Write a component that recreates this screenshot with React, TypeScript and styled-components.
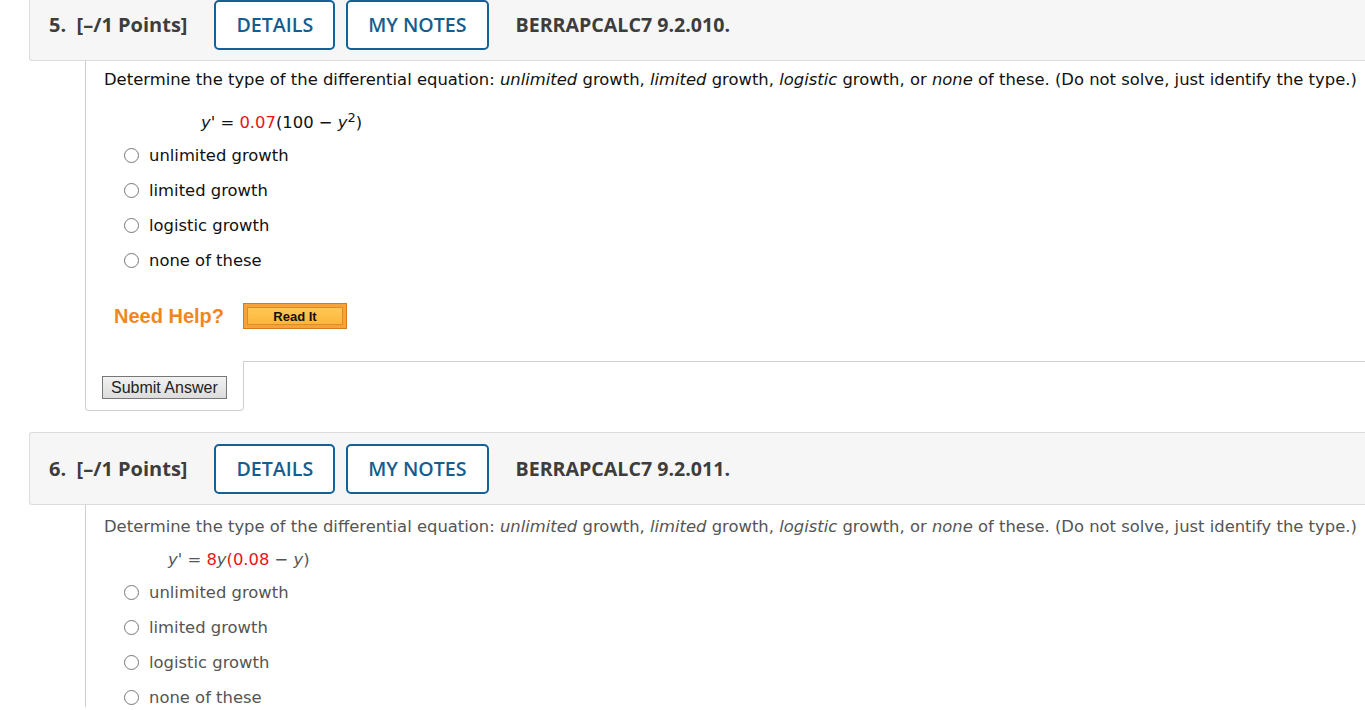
import React from 'react';
import styled, { createGlobalStyle } from 'styled-components';

const GlobalStyle = createGlobalStyle`
    body {
        margin: 0;
        background: #fff;
        font-family: "DejaVu Sans", Verdana, sans-serif;
        overflow: hidden;
    }
`;

const Page = styled.div`
    margin-top: -12px;
    padding-left: 29px;
`;

const Question = styled.section`
    margin-bottom: 21px;
`;

const Header = styled.div`
    display: flex;
    align-items: center;
    height: 73px;
    padding-left: 19px;
    background: #f6f6f6;
    border: 1px solid #dcdcdc;
    border-right: none;
    border-radius: 3px 0 0 3px;
    box-sizing: border-box;
`;

const Points = styled.span`
    font-family: "Open Sans", sans-serif;
    font-weight: 700;
    font-size: 20px;
    color: #3d3d3d;
    margin-right: 27px;
`;

const HeaderButton = styled.button`
    height: 50px;
    padding: 0 20px;
    margin-right: 11px;
    background: #fff;
    border: 2px solid #136296;
    border-radius: 5px;
    font-family: "Open Sans", sans-serif;
    font-weight: 600;
    font-size: 19.6px;
    color: #155d8f;
`;

const Code = styled.span`
    margin-left: 16px;
    font-family: "Open Sans", sans-serif;
    font-weight: 700;
    font-size: 19.6px;
    color: #3d3d3d;
`;

const Body = styled.div<{ $muted?: boolean; $top: number }>`
    margin-left: 56px;
    border-left: 1px solid #cfcfcf;
    padding: ${p => p.$top}px 0 0 18px;
    color: ${p => (p.$muted ? '#555' : '#111')};
    font-size: 16.4px;
`;

const Prompt = styled.p`
    margin: 0;
    line-height: 20px;
    white-space: nowrap;
`;

const Equation = styled.div<{ $indent: number; $gap: number }>`
    margin: ${p => p.$gap}px 0 0 ${p => p.$indent}px;
    line-height: 22px;
`;

const Var = styled.i`
    font-style: italic;
`;

const Red = styled.span`
    color: #e4151b;
`;

const Sup = styled.sup`
    font-size: 13px;
`;

const Options = styled.div`
    display: flex;
    flex-direction: column;
    gap: 15px;
    margin-top: 11px;
    padding-left: 20px;
`;

const Option = styled.label`
    display: flex;
    align-items: center;
    gap: 10px;
    height: 20px;
`;

const Radio = styled.span`
    width: 15px;
    height: 15px;
    border: 1.5px solid #777;
    border-radius: 50%;
    box-sizing: border-box;
    background: #fff;
`;

const HelpRow = styled.div`
    display: flex;
    align-items: center;
    gap: 19px;
    margin: 33px 0 0 10px;
    padding-bottom: 32px;
`;

const NeedHelp = styled.span`
    font-family: "Liberation Sans", Arial, sans-serif;
    font-weight: 700;
    font-size: 20px;
    color: #f1871b;
`;

const ReadIt = styled.button`
    width: 104px;
    height: 26px;
    padding: 0;
    background: #f5a23a;
    border: 1px solid #d47a1f;
    display: flex;
    align-items: center;
    justify-content: center;
    font-family: "Liberation Sans", Arial, sans-serif;
    font-weight: 700;
    font-size: 13px;
    color: #111;

    span {
        display: flex;
        align-items: center;
        justify-content: center;
        width: 96px;
        height: 18px;
        background: linear-gradient(#ffc753, #fdb63e);
        border: 1px solid #dc8d2a;
        box-sizing: border-box;
    }
`;

const Footer = styled.div`
    display: flex;
    margin-left: 56px;
`;

const SubmitBox = styled.div`
    width: 159px;
    height: 50px;
    box-sizing: border-box;
    border: 1px solid #cfcfcf;
    border-top: none;
    border-radius: 0 0 4px 4px;
    padding: 15px 0 0 16px;
`;

const Rest = styled.div`
    flex: 1;
    border-top: 1px solid #cfcfcf;
`;

const SubmitButton = styled.button`
    height: 23px;
    padding: 0 8px;
    background: linear-gradient(#f2f2f2, #dcdcdc);
    border: 1px solid #777;
    border-radius: 0;
    font-family: "Liberation Sans", Arial, sans-serif;
    font-size: 16px;
    color: #222;
    line-height: 19px;
`;

const OPTIONS = ['unlimited growth', 'limited growth', 'logistic growth', 'none of these'];

const PromptText = () => (
    <Prompt>
        Determine the type of the differential equation: <Var>unlimited</Var> growth, <Var>limited</Var> growth,{' '}
        <Var>logistic</Var> growth, or <Var>none</Var> of these. (Do not solve, just identify the type.)
    </Prompt>
);

const QuestionHeader = ({ num, code }: { num: number; code: string }) => (
    <Header>
        <Points>{num}.&nbsp; [–/1 Points]</Points>
        <HeaderButton>DETAILS</HeaderButton>
        <HeaderButton>MY NOTES</HeaderButton>
        <Code>{code}</Code>
    </Header>
);

const OptionList = () => (
    <Options>
        {OPTIONS.map(o => (
            <Option key={o}>
                <Radio />
                {o}
            </Option>
        ))}
    </Options>
);

const App = () => (
    <>
        <GlobalStyle />
        <Page>
            <Question>
                <QuestionHeader num={5} code="BERRAPCALC7 9.2.010." />
                <Body $top={9}>
                    <PromptText />
                    <Equation $indent={97} $gap={17}>
                        <Var>y'</Var> = <Red>0.07</Red>(100 − <Var>y</Var>
                        <Sup>2</Sup>)
                    </Equation>
                    <OptionList />
                    <HelpRow>
                        <NeedHelp>Need Help?</NeedHelp>
                        <ReadIt>
                            <span>Read It</span>
                        </ReadIt>
                    </HelpRow>
                </Body>
                <Footer>
                    <SubmitBox>
                        <SubmitButton>Submit Answer</SubmitButton>
                    </SubmitBox>
                    <Rest />
                </Footer>
            </Question>
            <Question>
                <QuestionHeader num={6} code="BERRAPCALC7 9.2.011." />
                <Body $muted $top={12}>
                    <PromptText />
                    <Equation $indent={64} $gap={12}>
                        <Var>y'</Var> = <Red>8</Red><Var>y</Var><Red>(0.08</Red> − <Var>y</Var>)
                    </Equation>
                    <OptionList />
                </Body>
            </Question>
        </Page>
    </>
);

export default App;
